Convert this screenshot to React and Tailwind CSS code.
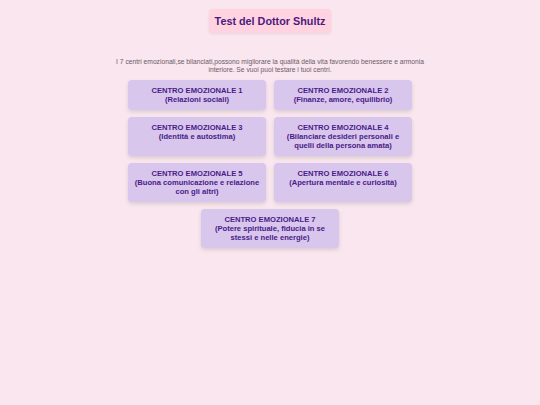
import React from 'react';

const centri = [
    { n: 1, desc: 'Relazioni sociali' },
    { n: 2, desc: 'Finanze, amore, equilibrio' },
    { n: 3, desc: 'Identità e autostima' },
    { n: 4, desc: 'Bilanciare desideri personali e quelli della persona amata' },
    { n: 5, desc: 'Buona comunicazione e relazione con gli altri' },
    { n: 6, desc: 'Apertura mentale e curiosità' },
    { n: 7, desc: 'Potere spirituale, fiducia in se stessi e nelle energie' },
];

function App() {
    return (
        <div className="min-h-[405px] bg-[#f9e6ee] font-['Liberation_Sans',Arial,sans-serif] flex flex-col items-center pt-[9px]">
            <h1 className="bg-[#ffd3df] text-[#4b1a7e] font-bold text-[10.8px] leading-[24px] h-[24px] px-[6px] rounded-[4px] shadow-[0_1px_3px_rgba(0,0,0,0.08)]">
                Test del Dottor Shultz
            </h1>
            <p className="mt-[25px] w-[330px] text-center text-[6.7px] leading-[8px] text-[#6b5a68]">
                I 7 centri emozionali,se bilanciati,possono migliorare la qualità della vita favorendo benessere e armonia interiore. Se vuoi puoi testare i tuoi centri.
            </p>
            <div className="mt-[6px] w-[284px] flex flex-wrap justify-center gap-x-[8px] gap-y-[7px]">
                {centri.map((c) => (
                    <div
                        key={c.n}
                        className="w-[138px] bg-[#d8c6ec] rounded-[4px] px-[4px] pt-[6px] pb-[6px] text-center text-[#4a1b88] font-bold text-[7.6px] leading-[9px] shadow-[0_2px_4px_rgba(0,0,0,0.12)] cursor-pointer"
                    >
                        CENTRO EMOZIONALE {c.n}
                        <br />
                        ({c.desc})
                    </div>
                ))}
            </div>
        </div>
    );
}

export default App;
